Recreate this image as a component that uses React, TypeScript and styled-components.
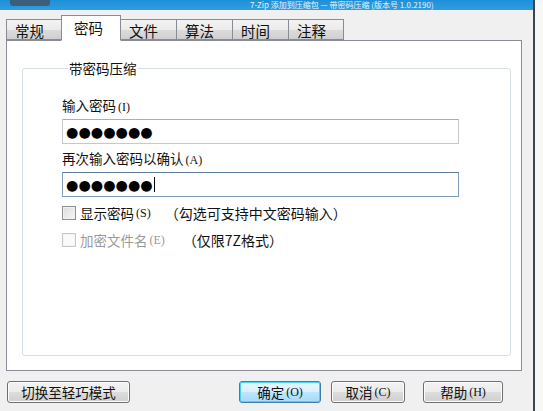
import React from "react";
import styled, { createGlobalStyle } from "styled-components";

const GlobalStyle = createGlobalStyle`
  html, body {
    margin: 0;
    padding: 0;
    background: #f7f7f5;
  }
  body {
    font-family: "Noto Sans CJK SC", "Noto Sans", sans-serif;
    font-size: 13px;
    color: #111;
  }
`;

const Screen = styled.div`
  width: 543px;
  height: 411px;
  overflow: hidden;
  display: flex;
`;

const Window = styled.div`
  width: 535px;
  height: 411px;
  background: #f0f0f0;
  border-right: 2px solid #3a4550;
  display: flex;
  flex-direction: column;
  box-sizing: border-box;
`;

const TitleBar = styled.div`
  height: 10px;
  flex: none;
  background: linear-gradient(#1f8fd8, #2d9ee0);
  display: flex;
  align-items: center;
  overflow: hidden;
`;

const TitleIcon = styled.div`
  width: 40px;
  height: 6px;
  margin-left: 10px;
  align-self: flex-start;
  background: #3b5f7a;
  border-radius: 0 0 3px 3px;
`;

const TitleText = styled.div`
  margin-left: 200px;
  color: #e8f4fc;
  font-size: 8px;
  line-height: 10px;
  white-space: nowrap;
`;

const Body = styled.div`
  flex: 1;
  display: flex;
  flex-direction: column;
  padding: 5px 11px 0 6px;
`;

const TabRow = styled.div`
  display: flex;
  align-items: flex-end;
  height: 25px;
  position: relative;
  z-index: 1;
`;

const Tab = styled.div<{ $active?: boolean }>`
  box-sizing: border-box;
  height: ${(p) => (p.$active ? 26 : 21)}px;
  margin-bottom: ${(p) => (p.$active ? -1 : 0)}px;
  width: ${(p) => (p.$active ? 60 : 56)}px;
  margin-left: ${(p) => (p.$active ? -1 : 0)}px;
  margin-right: ${(p) => (p.$active ? -1 : 0)}px;
  border: 1px solid #898c95;
  border-bottom: ${(p) => (p.$active ? "1px solid #fff" : "1px solid #898c95")};
  border-right: ${(p) => (p.$active ? "1px solid #898c95" : "none")};
  background: ${(p) =>
    p.$active ? "#fff" : "linear-gradient(#f3f3f3, #ebebeb 50%, #dcdcdc 50%, #cfcfcf)"};
  font-size: 14.5px;
  line-height: 19px;
  padding: ${(p) => (p.$active ? "2px 0 0 12px" : "1px 0 0 8px")};
  color: #111;
  z-index: ${(p) => (p.$active ? 2 : 1)};
  &:last-child {
    border-right: 1px solid #898c95;
  }
`;

const Panel = styled.div`
  box-sizing: border-box;
  height: 331px;
  background: #fff;
  border: 1px solid #898c95;
  padding: 19px 10px 14px 15px;
  display: flex;
`;

const Group = styled.fieldset`
  flex: 1;
  margin: 0;
  border: 1px solid #d5dfe5;
  border-radius: 3px;
  padding: 21px 0 0 39px;
  display: flex;
  flex-direction: column;
  box-shadow: inset 1px 1px 0 #fff;
`;

const Legend = styled.legend`
  font-size: 13.5px;
  line-height: 16px;
  padding: 0 1px;
  margin-left: 6px;
`;

const FieldLabel = styled.div`
  font-size: 13.5px;
  line-height: 16px;
  height: 16px;
  margin-bottom: 6px;
`;

const Hint = styled.span`
  font-size: 12px;
  font-family: "Liberation Serif", serif;
  margin-left: 2px;
`;

const PasswordBox = styled.div<{ $focused?: boolean }>`
  box-sizing: border-box;
  width: 397px;
  height: 25px;
  border: 1px solid ${(p) => (p.$focused ? "#7f9db9" : "#c5c8cc")};
  border-top-color: ${(p) => (p.$focused ? "#5f7d99" : "#abadb3")};
  background: #fff;
  display: flex;
  align-items: center;
  padding-left: 3px;
  margin-bottom: 6px;
`;

const Dots = styled.span`
  font-family: "DejaVu Sans", sans-serif;
  font-size: 14.2px;
  line-height: 18px;
  color: #000;
`;

const Caret = styled.span`
  display: inline-block;
  width: 1px;
  height: 15px;
  background: #000;
  margin-left: 1px;
`;

const CheckRow = styled.div<{ $disabled?: boolean }>`
  display: flex;
  align-items: center;
  height: 16px;
  margin-top: ${(p) => (p.$disabled ? 11 : 2)}px;
  color: ${(p) => (p.$disabled ? "#9a9a9a" : "#111")};
  font-size: 13.5px;
  line-height: 16px;
`;

const Box = styled.span<{ $disabled?: boolean }>`
  box-sizing: border-box;
  width: 14px;
  height: 14px;
  margin-right: 4px;
  border: 1px solid ${(p) => (p.$disabled ? "#c8c8c8" : "#8e8f8f")};
  background: ${(p) =>
    p.$disabled ? "#fafafa" : "linear-gradient(135deg, #dcdcdc, #f6f6f6)"};
  box-shadow: inset 0 0 0 1px ${(p) => (p.$disabled ? "#f4f4f4" : "#f0f0f0")};
`;

const Note = styled.span<{ $gap: number }>`
  margin-left: ${(p) => p.$gap}px;
  font-size: 14px;
  color: #111;
`;

const Footer = styled.div`
  display: flex;
  align-items: center;
  height: 22px;
  margin-top: 10px;
  margin-left: 1px;
`;

const Button = styled.div<{ $primary?: boolean; $width: number; $gap?: number }>`
  box-sizing: border-box;
  width: ${(p) => p.$width}px;
  height: 22px;
  margin-left: ${(p) => p.$gap || 0}px;
  border: 1px solid ${(p) => (p.$primary ? "#3c7fb1" : "#707070")};
  border-radius: 3px;
  background: ${(p) =>
    p.$primary
      ? "linear-gradient(#eaf6fd, #d9f0fc 50%, #bee6fd 50%, #a7d9f5)"
      : "linear-gradient(#f2f2f2, #ebebeb 50%, #dddddd 50%, #cfcfcf)"};
  box-shadow: inset 0 0 0 1px ${(p) => (p.$primary ? "#48d5f9" : "#fcfcfc")};
  display: flex;
  align-items: center;
  justify-content: center;
  font-size: 13.5px;
  line-height: 16px;
  color: #111;
`;

export default function App() {
  return (
    <Screen>
      <GlobalStyle />
      <Window>
        <TitleBar>
          <TitleIcon />
          <TitleText>7-Zip 添加到压缩包 — 带密码压缩 (版本号 1.0.2190)</TitleText>
        </TitleBar>
        <Body>
          <TabRow>
            <Tab>常规</Tab>
            <Tab $active>密码</Tab>
            <Tab>文件</Tab>
            <Tab>算法</Tab>
            <Tab>时间</Tab>
            <Tab>注释</Tab>
          </TabRow>
          <Panel>
            <Group>
              <Legend>带密码压缩</Legend>
              <FieldLabel>
                输入密码<Hint>(I)</Hint>
              </FieldLabel>
              <PasswordBox>
                <Dots>●●●●●●●</Dots>
              </PasswordBox>
              <FieldLabel>
                再次输入密码以确认<Hint>(A)</Hint>
              </FieldLabel>
              <PasswordBox $focused>
                <Dots>●●●●●●●</Dots>
                <Caret />
              </PasswordBox>
              <CheckRow>
                <Box />
                显示密码<Hint>(S)</Hint>
                <Note $gap={14}>（勾选可支持中文密码输入）</Note>
              </CheckRow>
              <CheckRow $disabled>
                <Box $disabled />
                加密文件名<Hint>(E)</Hint>
                <Note $gap={18}>（仅限7Z格式）</Note>
              </CheckRow>
            </Group>
          </Panel>
          <Footer>
            <Button $width={123}>切换至轻巧模式</Button>
            <Button $primary $width={82} $gap={109}>
              确定<Hint>(O)</Hint>
            </Button>
            <Button $width={74} $gap={10}>
              取消<Hint>(C)</Hint>
            </Button>
            <Button $width={80} $gap={18}>
              帮助<Hint>(H)</Hint>
            </Button>
          </Footer>
        </Body>
      </Window>
    </Screen>
  );
}
